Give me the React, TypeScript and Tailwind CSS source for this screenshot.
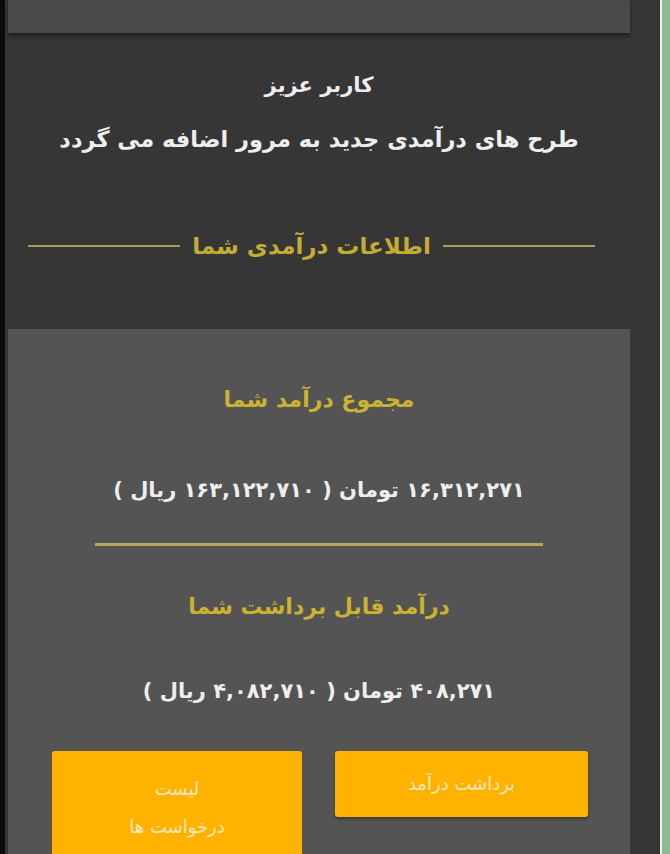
export default function App() {
  const font = { fontFamily: '"DejaVu Sans", "Noto Sans", sans-serif' };

  return (
    <div dir="rtl" className="flex h-[854px] w-[670px] overflow-hidden bg-[#363636]" style={font}>
      {/* right edge: green frame + white line */}
      <div className="w-[8px] shrink-0 bg-[#8cbc8e]" />
      <div className="w-[2px] shrink-0 bg-[#eef2ee]" />

      <div className="flex flex-1 flex-col pr-[30px] pl-[3px]">
        {/* top card edge */}
        <div className="h-[33px] shrink-0 bg-[#4a4a4a] shadow-[0_3px_4px_rgba(0,0,0,0.45)]" />

        <div className="flex flex-col items-center pt-[37px] text-[#eeeeee]">
          <h2 className="text-[21px] font-bold leading-[30px]">کاربر عزیز</h2>
          <p className="mt-[24px] text-[22.5px] font-bold leading-[30px]">
            طرح های درآمدی جدید به مرور اضافه می گردد
          </p>
        </div>

        <div className="-mr-[30px] mt-[76px] flex items-center gap-[12px] pr-[65px] pl-[20px]">
          <div className="h-[2px] flex-1 bg-[#a89c52]" />
          <span className="text-[23px] font-bold leading-[32px] text-[#c3ac33]">اطلاعات درآمدی شما</span>
          <div className="h-[2px] flex-1 bg-[#a89c52]" />
        </div>

        {/* income card */}
        <div className="mt-[67px] flex flex-1 flex-col items-center bg-[#545454]">
          <h3 className="mt-[55px] text-[22px] font-bold leading-[32px] text-[#cbb22f]">مجموع درآمد شما</h3>
          <p className="mt-[58px] text-[21px] font-bold leading-[32px] text-[#eeeeee]">
            ۱۶,۳۱۲,۲۷۱ تومان ( ۱۶۳,۱۲۲,۷۱۰ ریال )
          </p>
          <div className="mt-[37px] h-[3px] w-[448px] bg-[#b5a557]" />
          <h3 className="mt-[45px] text-[22px] font-bold leading-[32px] text-[#cbb22f]">درآمد قابل برداشت شما</h3>
          <p className="mt-[52px] text-[21px] font-bold leading-[32px] text-[#eeeeee]">
            ۴۰۸,۲۷۱ تومان ( ۴,۰۸۲,۷۱۰ ریال )
          </p>

          <div className="mt-[44px] flex w-full items-start justify-between pr-[42px] pl-[44px]">
            <button className="flex h-[66px] w-[253px] items-center justify-center rounded-[3px] bg-[#ffb300] text-[18px] leading-[26px] text-[#f8e8c2] shadow-[0_2px_3px_rgba(0,0,0,0.3)]">
              برداشت درآمد
            </button>
            <button className="flex h-[120px] w-[250px] flex-col items-center rounded-[3px] bg-[#ffb300] pt-[19px] text-[18px] leading-[38px] text-[#f8e8c2]">
              <span>لیست</span>
              <span>درخواست ها</span>
            </button>
          </div>
        </div>
      </div>

      <div className="w-[5px] shrink-0 bg-[#0a0a0a]" />
    </div>
  );
}
